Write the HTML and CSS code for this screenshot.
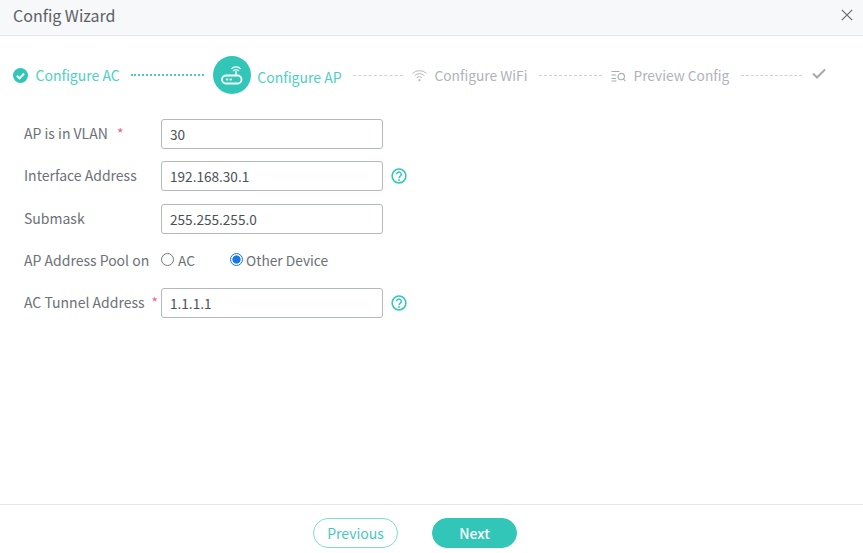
FILE: index.html
```html
<!DOCTYPE html>
<html lang="en">
<head>
<meta charset="utf-8">
<title>Config Wizard</title>
<link rel="stylesheet" href="styles.css">
</head>
<body>
<div class="dialog">
  <header class="head">
    <h1 class="title">Config Wizard</h1>
    <svg class="close" viewBox="0 0 12 12" width="12" height="12"><path d="M.8.8l10.4 10.4M11.2.8L.8 11.2" fill="none" stroke="#666b73" stroke-width="1.2"/></svg>
  </header>
  <nav class="steps">
    <svg class="ico" viewBox="0 0 15 15" width="15" height="15"><circle cx="7.5" cy="7.5" r="7.5" fill="#31c6b7"/><path d="M3.9 7.8l2.6 2.5 4.6-4.8" fill="none" stroke="#fff" stroke-width="1.9"/></svg>
    <span class="label on l1">Configure AC</span>
    <i class="line done w73"></i>
    <span class="disc">
      <svg viewBox="0 0 24 24" width="24" height="24"><rect x="2" y="12.5" width="19.5" height="8" rx="4" fill="none" stroke="#fff" stroke-width="1.8"/><rect x="6" y="15.6" width="2.2" height="1.8" fill="#fff"/><rect x="9.6" y="15.6" width="2.2" height="1.8" fill="#fff"/><path d="M16 12.5V8" stroke="#fff" stroke-width="1.4"/><path d="M13 8a4 4 0 0 1 6 0M11.3 5.8a6.6 6.6 0 0 1 9.4 0" fill="none" stroke="#fff" stroke-width="1.2"/></svg>
    </span>
    <span class="label on l2">Configure AP</span>
    <i class="line w50"></i>
    <svg class="ico" viewBox="0 0 15 13" width="15" height="13"><path d="M.6 4.4a10 10 0 0 1 13.8 0M2.7 6.6a7 7 0 0 1 9.6 0M4.8 8.7a4 4 0 0 1 5.4 0" fill="none" stroke="#b5b8bd" stroke-width="1"/><circle cx="7.5" cy="11.2" r="1.1" fill="#b5b8bd"/></svg>
    <span class="label l3">Configure WiFi</span>
    <i class="line w63"></i>
    <svg class="ico" viewBox="0 0 15 13" width="15" height="13"><path d="M.5 2.5h8M.5 6h4.5M.5 9.5h4.5M.5 12h5" fill="none" stroke="#a9acb2" stroke-width="1"/><circle cx="10.2" cy="7.6" r="3.2" fill="none" stroke="#a9acb2" stroke-width="1.1"/><path d="M12.4 10l2 2.2" stroke="#a9acb2" stroke-width="1.1"/></svg>
    <span class="label l4">Preview Config</span>
    <i class="line w61"></i>
    <svg class="ico last" viewBox="0 0 14 11" width="14" height="11"><path d="M1 5.5l4 4 8-8" fill="none" stroke="#a5a8ad" stroke-width="2"/></svg>
  </nav>
  <form class="form">
    <div class="row">
      <label class="name">AP is in VLAN<b class="req req-far">*</b></label>
      <input class="field" value="30">
    </div>
    <div class="row">
      <label class="name">Interface Address</label>
      <input class="field" value="192.168.30.1">
      <svg class="help" viewBox="0 0 16 16" width="16" height="16"><circle cx="8" cy="8" r="6.9" fill="none" stroke="#31c6b7" stroke-width="1.5"/><path d="M5.7 6.3a2.3 2.3 0 1 1 3.6 1.9C8.4 8.8 8 9.2 8 10.2" fill="none" stroke="#31c6b7" stroke-width="1.4"/><circle cx="8" cy="12" r=".9" fill="#31c6b7"/></svg>
    </div>
    <div class="row">
      <label class="name">Submask</label>
      <input class="field" value="255.255.255.0">
    </div>
    <div class="row radios">
      <label class="name">AP Address Pool on</label>
      <span class="radio r-ac"><i class="dot"></i>AC</span>
      <span class="radio"><i class="dot sel"></i>Other Device</span>
    </div>
    <div class="row">
      <label class="name">AC Tunnel Address<b class="req">*</b></label>
      <input class="field" value="1.1.1.1">
      <svg class="help" viewBox="0 0 16 16" width="16" height="16"><circle cx="8" cy="8" r="6.9" fill="none" stroke="#31c6b7" stroke-width="1.5"/><path d="M5.7 6.3a2.3 2.3 0 1 1 3.6 1.9C8.4 8.8 8 9.2 8 10.2" fill="none" stroke="#31c6b7" stroke-width="1.4"/><circle cx="8" cy="12" r=".9" fill="#31c6b7"/></svg>
    </div>
  </form>
  <footer class="foot">
    <button class="btn ghost" type="button">Previous</button>
    <button class="btn solid" type="button">Next</button>
  </footer>
</div>
</body>
</html>
```
FILE: styles.css
```css
* { box-sizing: border-box; }
html, body { margin: 0; height: 100%; }
body { font-family: "Noto Sans CJK SC", "Noto Sans", sans-serif; color: #5f6369; background: #fff; }
.dialog { width: 863px; height: 553px; display: flex; flex-direction: column; overflow: hidden; }
.head { height: 36px; flex: none; display: flex; align-items: center; justify-content: space-between; padding: 0 10px 5px 13px; background: #f7f8fa; border-bottom: 1px solid #e3e5ec; }
.title { margin: 0; font-size: 16px; font-weight: 400; color: #5c6066; }
.steps { height: 79px; flex: none; display: flex; align-items: center; padding: 0 0 1px 13px; font-size: 14px; }
.ico { flex: none; }
.label { color: #b0b3b8; margin: 0 12px 0 8px; white-space: nowrap; }
.label.on { color: #4dd0c3; }
.label.l1 { margin-left: 7.5px; margin-right: 11.5px; }
.label.l2 { margin-left: 6px; margin-right: 11px; position: relative; top: 2px; }
.label.l3 { font-size: 13.75px; }
.label.l4 { margin-left: 7px; font-size: 13.75px; }
.line { display: block; flex: none; height: 0; border-top: 1px dashed #cfd1d5; }
.line.done { border-top: 2px dotted #45cfc1; }
.w73 { width: 73px; margin-right: 9px; }
.w50 { width: 50px; margin-right: 9px; }
.w63 { width: 63px; margin-right: 9px; }
.w61 { width: 61px; margin-right: 10px; }
.last { margin-top: -3px; }
.disc { flex: none; width: 38px; height: 38px; border-radius: 50%; background: #31c6b7; display: flex; align-items: center; justify-content: center; }
.form { flex: 1; padding: 4px 0 0 24px; font-size: 14px; }
.row { display: flex; align-items: center; height: 30px; margin-bottom: 12.25px; }
.name { flex: none; width: 137px; position: relative; top: -1px; color: #6d7177; white-space: nowrap; }
.req { color: #f4608a; font-weight: 400; margin-left: 7px; }
.req-far { margin-left: 9px; }
.field { width: 222px; height: 30px; padding: 0 8px; border: 1px solid #b4b7bb; border-radius: 3px; font: 13.6px "Noto Sans CJK SC", "Noto Sans", sans-serif; color: #4c5055; background: #fff; }
.help { margin-left: 8px; flex: none; }
.radios { position: relative; }
.radio { display: flex; align-items: center; color: #6d7177; white-space: nowrap; position: relative; top: -1px; font-size: 13.75px; }
.r-ac { width: 69px; }
.dot { width: 13px; height: 13px; margin-right: 4px; border: 1px solid #73777c; border-radius: 50%; background: #fff; flex: none; }
.dot.sel { margin-right: 3px; border-color: #1677e6; background: radial-gradient(circle, #1677e6 0 3.8px, #fff 4.4px); }
.foot { height: 49px; flex: none; border-top: 1px solid #e3e5ec; display: flex; justify-content: center; align-items: flex-start; gap: 34px; padding: 13px 33px 0 0; }
.btn { width: 85px; height: 30px; border-radius: 15px; font: 14px "Noto Sans CJK SC", "Noto Sans", sans-serif; padding: 0; }
.ghost { background: #fff; border: 1.5px solid #7fdbd1; color: #45c9bb; }
.solid { background: #31c6b7; border: 1px solid #31c6b7; color: #fff; font-weight: 500; }
```
